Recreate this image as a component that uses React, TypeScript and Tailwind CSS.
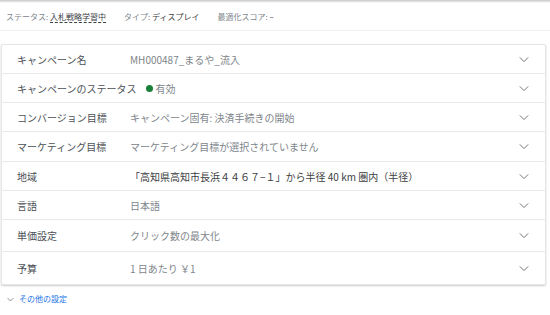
import React from 'react';

const rows: { label: string; value: React.ReactNode; h: string }[] = [
  { label: 'キャンペーン名', value: 'MH000487_まるや_流入', h: 'h-[28px]' },
  {
    label: 'キャンペーンのステータス',
    value: (
      <span className="flex items-center gap-[3px]">
        <span className="inline-block w-[7px] h-[7px] rounded-full bg-[#188038]" />
        有効
      </span>
    ),
    h: 'h-[29px]',
  },
  { label: 'コンバージョン目標', value: 'キャンペーン固有: 決済手続きの開始', h: 'h-[29px]' },
  { label: 'マーケティング目標', value: 'マーケティング目標が選択されていません', h: 'h-[30px]' },
  {
    label: '地域',
    value: (
      <span className="text-[#3c4043]">
        「高知県高知市長浜４４６７−１」から半径 40 km 圏内（半径）
      </span>
    ),
    h: 'h-[29px]',
  },
  { label: '言語', value: '日本語', h: 'h-[29px]' },
  { label: '単価設定', value: 'クリック数の最大化', h: 'h-[32px]' },
  { label: '予算', value: '1 日あたり ￥1', h: 'h-[33px]' },
];

const Chevron = ({ className = '' }: { className?: string }) => (
  <svg viewBox="0 0 12 8" className={className} fill="none" stroke="currentColor" strokeWidth="1.2">
    <path d="M1 1.5 L6 6.5 L11 1.5" />
  </svg>
);

export default function App() {
  return (
    <div className="w-[550px] h-[315px] bg-white overflow-hidden" style={{ fontFamily: '"Noto Sans CJK JP", "Noto Sans", sans-serif' }}>
      <div className="h-[3px] bg-gradient-to-b from-[#c8c8c8] to-white" />
      {/* Status bar */}
      <div className="h-[28px] flex items-center px-[6px] gap-[18px] text-[8px] text-[#80868b] border-b border-[#f1f3f4]">
        <span>
          ステータス: <span className="text-[#3c4043] border-b border-dashed border-[#3c4043]">入札戦略学習中</span>
        </span>
        <span>タイプ: <span className="text-[#3c4043]">ディスプレイ</span></span>
        <span>最適化スコア: <span className="text-[#3c4043]">–</span></span>
      </div>
      {/* Settings card */}
      <div className="mt-[13px] ml-[1px] w-[545px] bg-white border border-[#e6e6e6] rounded-[2px] shadow-[0_1px_2px_rgba(60,64,67,0.25)]">
        {rows.map((r, i) => (
          <div
            key={r.label}
            className={`${r.h} flex items-center text-[10px] ${i > 0 ? 'border-t border-[#e8eaed]' : ''}`}
          >
            <div className="flex-none min-w-[128px] pl-[15px] pr-[9px] text-[#4d5156] whitespace-nowrap">{r.label}</div>
            <div className="flex-1 text-[#80868b] whitespace-nowrap">{r.value}</div>
            <Chevron className="w-[10px] h-[7px] mr-[16px] text-[#70757a]" />
          </div>
        ))}
      </div>
      <div className="mt-[8px] ml-[7px] flex items-center gap-[5px] text-[8px] text-[#1a73e8]">
        <Chevron className="w-[7px] h-[5px] text-[#5f6368]" />
        <span>その他の設定</span>
      </div>
    </div>
  );
}
